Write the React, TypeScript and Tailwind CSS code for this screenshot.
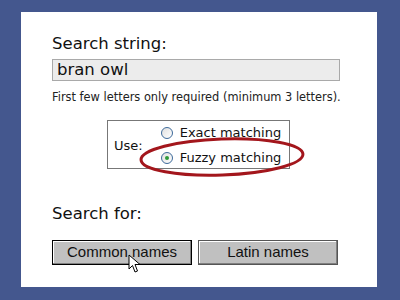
export default function App() {
  return (
    <div className="w-[400px] h-[300px] bg-[#44578e] pt-[12px] pl-[21px] overflow-hidden">
      <div
        className="relative w-[356px] h-[275px] bg-white pl-[31px] pt-[22px] text-[#111]"
        style={{ fontFamily: '"DejaVu Sans", Verdana, sans-serif' }}
      >
        <div className="text-[16.5px] leading-[20px]">Search string:</div>
        <div className="mt-[5px] w-[288px] h-[22px] bg-[#ececec] border border-[#a9a9a9] px-[4px] text-[16.5px] leading-[20px]">
          bran owl
        </div>
        <div className="mt-[9px] text-[11.4px] leading-[14px] text-[#222]">
          First few letters only required (minimum 3 letters).
        </div>

        <div className="mt-[16px] ml-[55px] w-[183px] h-[49px] border border-[#777] flex items-center pl-[6px]">
          <span className="text-[13px] mt-[2px]">Use:</span>
          <div className="ml-[18px] mt-[2px] flex flex-col gap-[9px]">
            <label className="flex items-center gap-[7px] text-[13px] leading-[16px]">
              <span className="w-[12px] h-[12px] rounded-full border border-[#3d6a9a] bg-gradient-to-br from-[#e0e0e0] to-white" />
              Exact matching
            </label>
            <label className="flex items-center gap-[7px] text-[13px] leading-[16px]">
              <span className="w-[12px] h-[12px] rounded-full border border-[#3d6a9a] bg-gradient-to-br from-[#e0e0e0] to-white flex items-center justify-center">
                <span className="w-[4px] h-[4px] rounded-full bg-[#2e9a3a]" />
              </span>
              Fuzzy matching
            </label>
          </div>
        </div>

        <div className="mt-[35px] text-[16.5px] leading-[20px]">Search for:</div>

        <div className="mt-[16px] flex gap-[6px]" style={{ fontFamily: '"Liberation Sans", Arial, sans-serif' }}>
          <button className="w-[140px] h-[25px] bg-[#c0c0c0] border border-black shadow-[inset_-1px_-1px_0_#808080,inset_1px_1px_0_#fff] text-[15px] text-[#111]">
            Common names
          </button>
          <button className="w-[140px] h-[25px] bg-[#c0c0c0] border border-[#555] shadow-[inset_-1px_-1px_0_#808080,inset_1px_1px_0_#fff] text-[15px] text-[#111]">
            Latin names
          </button>
        </div>

        <svg className="absolute left-[95px] top-[122px]" width="194" height="48" viewBox="0 0 194 48">
          <ellipse cx="106" cy="23" rx="81" ry="18" fill="none" stroke="#a3161c" strokeWidth="3" transform="rotate(-2 106 23)" />
        </svg>

        <svg className="absolute left-[107px] top-[242px]" width="14" height="20" viewBox="0 0 14 20">
          <path d="M1 1 L1 15 L4.5 11.5 L7 18 L9.5 17 L7 10.5 L12 10.5 Z" fill="white" stroke="black" strokeWidth="1" strokeLinejoin="round" />
        </svg>
      </div>
    </div>
  );
}
